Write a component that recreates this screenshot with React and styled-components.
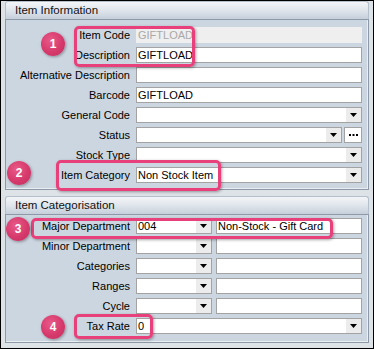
import React from "react";
import styled, { createGlobalStyle } from "styled-components";

const GlobalStyle = createGlobalStyle`
  html, body {
    margin: 0;
    padding: 0;
    background: #ffffff;
  }
  body {
    font-family: "Liberation Sans", Arial, sans-serif;
  }
`;

const infoRows = [
  { label: "Item Code", value: "GIFTLOAD", disabled: true },
  { label: "Description", value: "GIFTLOAD" },
  { label: "Alternative Description", value: "" },
  { label: "Barcode", value: "GIFTLOAD" },
  { label: "General Code", value: "", combo: true },
  { label: "Status", value: "", combo: true, more: true },
  { label: "Stock Type", value: "", combo: true },
  { label: "Item Category", value: "Non Stock Item", combo: true },
];

const categoryRows = [
  { label: "Major Department", value: "004", extra: "Non-Stock - Gift Card" },
  { label: "Minor Department", value: "", extra: "" },
  { label: "Categories", value: "", extra: "" },
  { label: "Ranges", value: "", extra: "" },
  { label: "Cycle", value: "", extra: "" },
  { label: "Tax Rate", value: "0", combo: true },
];

// callouts drawn over the form
const boxes = [
  { x: 73, y: 25, w: 121, h: 41 },
  { x: 55, y: 159, w: 165, h: 31 },
  { x: 30, y: 217, w: 302, h: 21 },
  { x: 73, y: 313, w: 79, h: 25 },
];

const badges = [
  { n: 1, x: 52, y: 43 },
  { n: 2, x: 18, y: 172 },
  { n: 3, x: 17, y: 228 },
  { n: 4, x: 52, y: 326 },
];

const DropArrow = () => (
  <Styles.ArrowBox>
    <svg width="7" height="4" viewBox="0 0 7 4">
      <path d="M0 0 H7 L3.5 4 Z" fill="#000" />
    </svg>
  </Styles.ArrowBox>
);

const Input = ({ value, disabled, combo }) => (
  <Styles.Input $disabled={disabled}>
    <span>{value}</span>
    {combo && <DropArrow />}
  </Styles.Input>
);

const FormRow = ({ row }) => (
  <Styles.Row>
    <Styles.Label>{row.label}</Styles.Label>
    {row.extra !== undefined ? (
      <Styles.Pair>
        <Input value={row.value} combo />
        <Input value={row.extra} />
      </Styles.Pair>
    ) : row.more ? (
      <Styles.WithButton>
        <Input value={row.value} combo />
        <Styles.MoreButton>
          <svg width="9" height="2" viewBox="0 0 9 2">
            <rect x="0" y="0" width="2" height="2" fill="#000" />
            <rect x="3.5" y="0" width="2" height="2" fill="#000" />
            <rect x="7" y="0" width="2" height="2" fill="#000" />
          </svg>
        </Styles.MoreButton>
      </Styles.WithButton>
    ) : (
      <Input value={row.value} disabled={row.disabled} combo={row.combo} />
    )}
  </Styles.Row>
);

const App = () => {
  return (
    <>
      <GlobalStyle />
      <Styles.Frame>
        <Styles.Section>
          <Styles.Header>Item Information</Styles.Header>
          <Styles.Body $top={7} $bottom={6}>
            {infoRows.map((row) => (
              <FormRow key={row.label} row={row} />
            ))}
          </Styles.Body>
        </Styles.Section>
        <Styles.Section>
          <Styles.Header>Item Categorisation</Styles.Header>
          <Styles.Body $top={3} $bottom={8}>
            {categoryRows.map((row) => (
              <FormRow key={row.label} row={row} />
            ))}
          </Styles.Body>
        </Styles.Section>

        {boxes.map((b, i) => (
          <Styles.Callout
            key={i}
            style={{ left: b.x, top: b.y, width: b.w, height: b.h }}
          />
        ))}
        {badges.map((b) => (
          <Styles.Badge key={b.n} style={{ left: b.x - 12, top: b.y - 12 }}>
            {b.n}
          </Styles.Badge>
        ))}
      </Styles.Frame>
    </>
  );
};

// styled
const Styles = {
  Frame: styled.div`
    position: relative;
    width: 374px;
    height: 349px;
    box-sizing: border-box;
    border: 1px solid #000;
    padding: 0 4px 5px 4px;
    display: flex;
    flex-direction: column;
    gap: 6px;
    background-color: #e6eaee;
    background-image: radial-gradient(#d3d9e0 0.6px, transparent 0.8px);
    background-size: 2px 2px;
    font-size: 11px;
    color: #000;
  `,
  Section: styled.div`
    display: flex;
    flex-direction: column;
  `,
  Header: styled.div`
    height: 18px;
    box-sizing: border-box;
    border: 1px solid #b4bfcc;
    border-bottom: none;
    border-radius: 3px 3px 0 0;
    background: linear-gradient(#f3f5f8 0%, #e2e7ed 45%, #c5cfdb 100%);
    padding-left: 9px;
    font-size: 11.5px;
    line-height: 17px;
    color: #111;
  `,
  Body: styled.div`
    display: flex;
    flex-direction: column;
    gap: 4px;
    border: 1px solid #8e99a7;
    box-shadow: inset -1px -1px 0 #e9eef3;
    background: #ccd6e1;
    padding: ${(p) => p.$top}px 6px ${(p) => p.$bottom}px 0;
  `,
  Row: styled.div`
    display: grid;
    grid-template-columns: 124px 1fr;
    column-gap: 6px;
    height: 16px;
    align-items: center;
  `,
  Label: styled.div`
    text-align: right;
    white-space: nowrap;
    line-height: 16px;
  `,
  Input: styled.div`
    height: 16px;
    box-sizing: border-box;
    display: flex;
    align-items: center;
    justify-content: space-between;
    border: 1px solid ${(p) => (p.$disabled ? "#efefef" : "#a3a3a3")};
    background: ${(p) => (p.$disabled ? "#efefef" : "#ffffff")};
    color: ${(p) => (p.$disabled ? "#a9a9a9" : "#000")};
    padding-left: 1px;
    min-width: 0;
    span {
      white-space: nowrap;
      line-height: 14px;
    }
  `,
  ArrowBox: styled.div`
    width: 15px;
    height: 14px;
    background: #ececec;
    display: flex;
    align-items: center;
    justify-content: center;
    flex-shrink: 0;
  `,
  Pair: styled.div`
    display: grid;
    grid-template-columns: 76px 1fr;
    column-gap: 4px;
  `,
  WithButton: styled.div`
    display: grid;
    grid-template-columns: 1fr 18px;
    column-gap: 2px;
  `,
  MoreButton: styled.div`
    height: 16px;
    box-sizing: border-box;
    border: 1px solid #a3a3a3;
    background: #fff;
    display: flex;
    align-items: center;
    justify-content: center;
  `,
  Callout: styled.div`
    position: absolute;
    box-sizing: border-box;
    border: 3px solid #e8407a;
    border-radius: 5px;
    box-shadow: 1px 1px 3px rgba(0, 0, 0, 0.35);
    pointer-events: none;
  `,
  Badge: styled.div`
    position: absolute;
    width: 24px;
    height: 24px;
    border-radius: 50%;
    background: radial-gradient(circle at 40% 35%, #e85a88 0%, #d63a6c 55%, #c22d5c 100%);
    box-shadow: 1px 1px 3px rgba(0, 0, 0, 0.35);
    color: #fff;
    font-weight: bold;
    font-size: 12px;
    line-height: 24px;
    text-align: center;
  `,
};

export default App;
